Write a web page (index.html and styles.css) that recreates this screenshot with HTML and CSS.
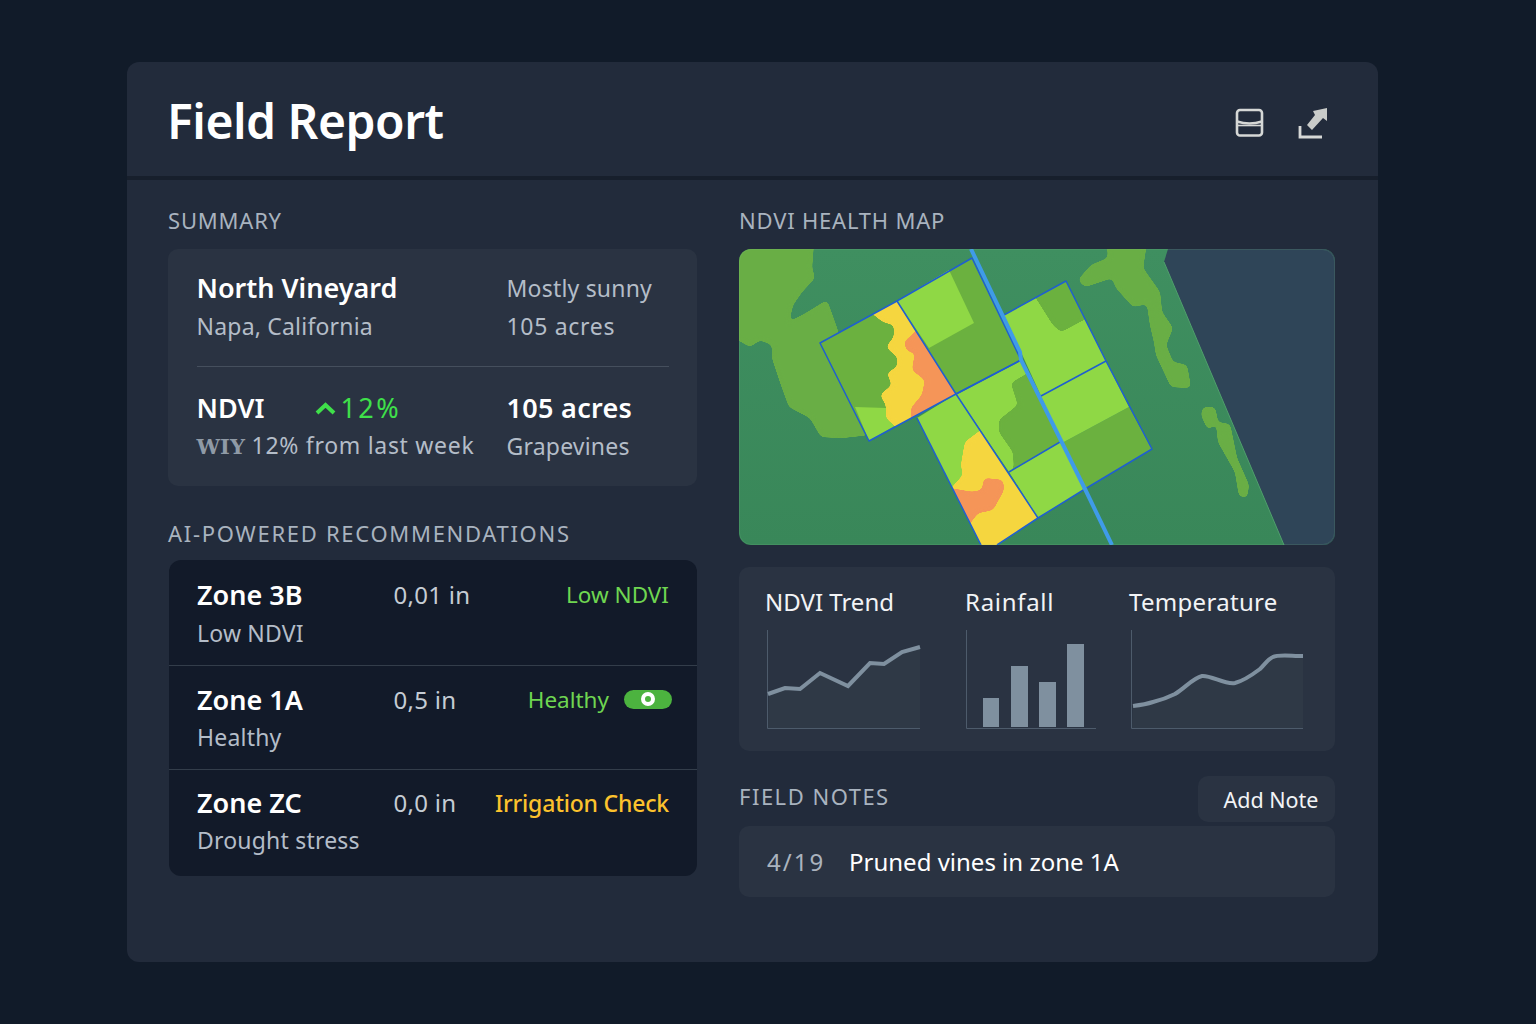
FILE: index.html
```html
<!DOCTYPE html>
<html lang="en">
<head>
  <meta charset="utf-8">
  <title>Field Report</title>
  <link rel="stylesheet" href="styles.css">
</head>
<body>
<main class="panel">
  <header class="top">
    <h1>Field Report</h1>
    <div class="top-icons">
      <svg class="icon" width="30" height="32" viewBox="0 0 30 32" fill="none" stroke="#d6d8d6" stroke-width="2.6">
        <rect x="2" y="3" width="25" height="25.5" rx="3"/>
        <path d="M2 14.5 Q14.5 18.5 27 14.5"/>
        <path d="M3 18.5 H26" stroke-width="1.6"/>
      </svg>
      <svg class="icon" width="32" height="34" viewBox="0 0 32 34">
        <path d="M3 20 V31 H25" fill="none" stroke="#d6d8d6" stroke-width="2.8"/>
        <polygon points="10,19 18,9 16,5 30,2 30,15 26,12 15,24" fill="#c9cbc9"/>
      </svg>
    </div>
  </header>

  <div class="cols">
    <div class="col-left">
      <h2 class="label">SUMMARY</h2>
      <section class="card summary">
        <div class="sum-row">
          <div>
            <div class="big">North Vineyard</div>
            <div class="sub">Napa, California</div>
          </div>
          <div>
            <div class="sub sub-top">Mostly sunny</div>
            <div class="sub sub-wide">105 acres</div>
          </div>
        </div>
        <div class="sum-row sum-lower">
          <div>
            <div class="big ndvi-line">
              <span class="ndvi-name">NDVI</span>
              <svg class="chevron" width="21" height="14" viewBox="0 0 21 14" fill="none" stroke="#3fe04a" stroke-width="4"><path d="M2 12 L10.5 4 L19 12"/></svg>
              <span class="delta">12%</span>
            </div>
            <div class="sub sub-wide"><b class="wiy">WIY</b> 12% from last week</div>
          </div>
          <div>
            <div class="big big-wide">105 acres</div>
            <div class="sub">Grapevines</div>
          </div>
        </div>
      </section>

      <h2 class="label label-rec">AI-POWERED RECOMMENDATIONS</h2>
      <section class="zones">
        <div class="zone">
          <div>
            <div class="big">Zone 3B</div>
            <div class="sub">Low NDVI</div>
          </div>
          <div class="amount">0,01 in</div>
          <div class="status green">Low NDVI</div>
        </div>
        <div class="zone">
          <div>
            <div class="big">Zone 1A</div>
            <div class="sub">Healthy</div>
          </div>
          <div class="amount">0,5 in</div>
          <div class="status green">Healthy <span class="toggle"><span class="toggle-dot"></span></span></div>
        </div>
        <div class="zone zone-last">
          <div>
            <div class="big">Zone ZC</div>
            <div class="sub">Drought stress</div>
          </div>
          <div class="amount">0,0 in</div>
          <div class="status amber">Irrigation Check</div>
        </div>
      </section>
    </div>

    <div class="col-right">
      <h2 class="label">NDVI HEALTH MAP</h2>
      <svg class="map" width="596" height="296" viewBox="0 0 596 296">
        <defs>
          <linearGradient id="ground" x1="0" y1="0" x2="0" y2="1">
            <stop offset="0" stop-color="#3f8f60"/>
            <stop offset="1" stop-color="#398759"/>
          </linearGradient>
          <filter id="goo" filterUnits="userSpaceOnUse" x="-30" y="-30" width="660" height="360" color-interpolation-filters="sRGB">
            <feGaussianBlur stdDeviation="2.4"/>
            <feColorMatrix values="1 0 0 0 0  0 1 0 0 0  0 0 1 0 0  0 0 0 18 -8"/>
          </filter>
          <clipPath id="clip-a"><polygon points="81,94 158,52 217,145 130,192"/></clipPath>
          <clipPath id="clip-c"><polygon points="178,169 217,145 299,269 258,296 242,296"/></clipPath>
          <clipPath id="clip-d"><polygon points="217,145 282,111 321,193 270,223"/></clipPath>
          <clipPath id="clip-f"><polygon points="265,66 327,32 367,112 302,147"/></clipPath>
        </defs>
        <rect width="596" height="296" fill="url(#ground)"/>
        <polygon points="429,0 425,13 545,296 596,296 596,0" fill="#2f4558"/>
        <path d="M425 13 L545 296" stroke="#4f9f6c" stroke-width="1"/>
        <g fill="#69ae45" filter="url(#goo)">
          <polygon points="-20,-20 76,-20 73,19 76,29 63,43 54,56 50,73 67,64 88,51 98,79 130,186 103,189 82,188 71,169 50,158 42,136 33,109 33,96 21,91 11,98 -20,80"/>
          <polygon points="367,-20 369,9 352,16 339,31 346,38 373,29 377,39 394,58 408,55 411,76 415,93 417,106 432,138 452,139 448,116 434,113 427,96 434,79 423,63 421,43 404,19 410,-20"/>
          <polygon points="464,158 476,158 479,173 469,181 462,166"/>
          <polygon points="477,173 491,175 498,209 510,236 508,249 500,247 496,223 479,193"/>
        </g>
        <g fill="#6bb13f">
          <polygon points="81,94 158,52 217,145 130,192"/>
          <polygon points="158,52 233,9 282,111 217,145"/>
          <polygon points="323,194 390,158 413,200 346,240"/>
        </g>
        <g fill="#8fd845">
          <polygon points="158,52 210,21 235,74 190,99"/>
          <polygon points="178,169 217,145 299,269 258,296 242,296"/>
          <polygon points="217,145 282,111 321,193 270,223"/>
          <polygon points="270,223 321,193 346,240 299,269"/>
          <polygon points="265,66 327,32 367,112 302,147"/>
          <polygon points="302,147 367,112 390,158 323,194"/>
          <polygon points="116,158 147,159 157,176 130,192"/>
        </g>
        <g clip-path="url(#clip-d)">
          <polygon filter="url(#goo)" fill="#6bb13f" points="296,120 272,134 279,156 260,171 260,183 274,203 275,219 262,232 335,198"/>
        </g>
        <g clip-path="url(#clip-f)">
          <polygon filter="url(#goo)" fill="#6bb13f" points="290,38 340,20 350,68 322,83 314,76"/>
        </g>
        <g clip-path="url(#clip-a)">
          <polygon filter="url(#goo)" fill="#f5d63f" points="130,62 144,73 155,76 155,88 147,98 159,109 158,118 148,124 153,136 141,146 147,156 147,169 157,178 165,190 235,150 165,40"/>
          <polygon filter="url(#goo)" fill="#f59558" points="176,83 165,93 168,102 176,104 173,121 186,131 183,146 172,159 172,175 235,150 190,70"/>
        </g>
        <g clip-path="url(#clip-c)">
          <polygon filter="url(#goo)" fill="#f5d63f" points="250,175 226,193 222,216 224,226 208,244 230,310 265,310 312,268"/>
          <polygon filter="url(#goo)" fill="#f59558" points="205,238 233,243 243,241 245,229 264,231 265,241 254,261 239,264 232,273 225,285"/>
        </g>
        <g fill="none" stroke="#1f5fd0" stroke-width="1.5" stroke-linejoin="round">
          <polygon points="81,94 158,52 233,9 282,111 217,145 130,192"/>
          <path d="M158 52 L217 145 L299 269"/>
          <path d="M178 169 L242 296"/>
          <path d="M258 296 L299 269 L346 240 L413 200 L367 112 L327 32 L265 66"/>
          <path d="M270 223 L321 193"/>
          <path d="M302 147 L367 112"/>
          <path d="M217 145 L282 111"/>
        </g>
        <path d="M232 0 L281 103 L282 111 L346 240 L373 296" fill="none" stroke="#3f9be8" stroke-width="4"/>
        <rect x="0.5" y="0.5" width="595" height="295" rx="12" fill="none" stroke="#7fc98a" stroke-opacity="0.15"/>
      </svg>

      <section class="card charts">
        <div class="chart">
          <h3>NDVI Trend</h3>
          <svg width="155" height="99" viewBox="0 0 155 99">
            <polygon points="2,64 18,58 33,59 53,43 81,56 103,33 117,34 135,22 153,17 153,98 1,98" fill="#2f3946"/>
            <path d="M0.5 0 V98.5 H153" fill="none" stroke="#4d5b6b"/>
            <polyline points="1,64 18,58 33,59 53,43 81,56 103,33 117,34 135,22 153,17" fill="none" stroke="#7f909f" stroke-width="4"/>
          </svg>
        </div>
        <div class="chart">
          <h3 class="title-rain">Rainfall</h3>
          <svg class="rain-plot" width="130" height="99" viewBox="0 0 130 99">
            <path d="M0.5 0 V98.5 H130" fill="none" stroke="#4d5b6b"/>
            <rect x="17" y="68" width="16" height="29" fill="#7f909f"/>
            <rect x="45" y="36" width="17" height="61" fill="#7f909f"/>
            <rect x="73" y="52" width="17" height="45" fill="#7f909f"/>
            <rect x="101" y="14" width="17" height="83" fill="#7f909f"/>
          </svg>
        </div>
        <div class="chart">
          <h3 class="title-temp">Temperature</h3>
          <svg width="173" height="99" viewBox="0 0 173 99">
            <path d="M2 76 C10 75 16 74 22 72 C30 70 38 67 44 64 C54 58 62 48 71 46 C80 45 94 55 104 53 C112 51 121 45 129 39 C134 34 137 29 142 27 C147 24 160 26 172 26 V98 H1 Z" fill="#2f3946"/>
            <path d="M0.5 0 V98.5 H172" fill="none" stroke="#4d5b6b"/>
            <path d="M2 76 C10 75 16 74 22 72 C30 70 38 67 44 64 C54 58 62 48 71 46 C80 45 94 55 104 53 C112 51 121 45 129 39 C134 34 137 29 142 27 C147 24 160 26 172 26" fill="none" stroke="#7f909f" stroke-width="4"/>
          </svg>
        </div>
      </section>

      <div class="notes-head">
        <h2 class="label label-flat">FIELD NOTES</h2>
        <button class="add-note">Add Note</button>
      </div>
      <section class="card note">
        <span class="note-date">4/19</span>
        <span class="note-text">Pruned vines in zone 1A</span>
      </section>
    </div>
  </div>
</main>
</body>
</html>
```

FILE: styles.css
```css
html, body {
    margin: 0;
    background: #111b29;
}

body {
    width: 1536px;
    height: 1024px;
    box-sizing: border-box;
    padding: 62px 158px 62px 127px;
    color: #fff;
    font-family: "Noto Sans", "Open Sans", sans-serif;
    overflow: hidden;
}

.panel {
    height: 900px;
    background: #222b3b;
    border-radius: 12px;
}

.top {
    height: 114px;
    display: flex;
    align-items: center;
    justify-content: space-between;
    padding: 0 49px 0 40px;
    border-bottom: 4px solid #171f2c;
}

h1 {
    margin: 3px 0 0;
    font-size: 48px;
    font-weight: 600;
    letter-spacing: -0.5px;
}

.top-icons {
    display: flex;
    gap: 32px;
    align-items: center;
    margin-top: 8px;
}

.icon {
    display: block;
}

.cols {
    display: grid;
    grid-template-columns: 529px 596px;
    column-gap: 42px;
    padding: 0 0 0 41px;
}

.label {
    margin: 0;
    height: 69px;
    line-height: 80px;
    font-size: 22px;
    font-weight: 400;
    letter-spacing: 0.8px;
    color: #a9b3bf;
}

.label-rec {
    height: 74px;
    line-height: 94px;
    letter-spacing: 1.7px;
}

.label-flat {
    height: auto;
    line-height: normal;
    letter-spacing: 1.5px;
    margin-top: -6px;
}

.card {
    background: #2a3342;
    border-radius: 10px;
}

.summary {
    height: 237px;
    box-sizing: border-box;
    padding: 20px 28px 0 28.5px;
}

.sum-row {
    display: grid;
    grid-template-columns: 310px auto;
    padding-bottom: 21px;
    border-bottom: 1px solid #454f5d;
}

.sum-lower {
    border-bottom: 0;
    padding-top: 22px;
}

.big {
    font-size: 27px;
    font-weight: 600;
    line-height: 38px;
}

.big-wide {
    letter-spacing: 0.3px;
}

.sub {
    font-size: 23px;
    line-height: 38px;
    letter-spacing: 0.2px;
    color: #b4bdc8;
}

.sub-top {
    line-height: 37px;
    padding-top: 1px;
}

.sub-wide {
    letter-spacing: 0.7px;
}

.ndvi-line {
    display: flex;
    align-items: center;
    margin-bottom: -1px;
}

.ndvi-name {
    width: 118px;
}

.chevron {
    margin-right: 5px;
}

.delta {
    color: #3fe04a;
    font-weight: 400;
    letter-spacing: 2.4px;
}

.wiy {
    font-family: "DejaVu Serif", serif;
    font-size: 21px;
    letter-spacing: 0;
    color: #8f9aa6;
}

.zones {
    background: #121a29;
    border-radius: 12px;
    height: 316px;
    margin-left: 1px;
    display: grid;
    grid-template-rows: 106px 104px 106px;
}

.zone {
    display: grid;
    grid-template-columns: 196.5px 1fr auto;
    align-items: start;
    padding: 15px 28px 0;
    border-bottom: 1px solid #333d4a;
}

.zone:first-child {
    padding-top: 16px;
}

.zone-last {
    border-bottom: 0;
    padding-top: 14px;
}

.zone .sub {
    line-height: 37px;
}

.zone:first-child .sub {
    line-height: 39px;
}

.amount {
    font-size: 24px;
    line-height: 38px;
    letter-spacing: 0.3px;
    color: #c5ccd4;
}

.status {
    font-size: 22.5px;
    line-height: 38px;
    display: flex;
    align-items: center;
    gap: 15px;
}

.green {
    color: #6fd651;
}

.amber {
    color: #fcc22d;
    font-size: 23px;
    font-weight: 500;
    letter-spacing: -0.2px;
}

.toggle {
    width: 48px;
    height: 19px;
    margin: -2px -3px 0 0;
    border-radius: 10px;
    background: #4cb33f;
    display: flex;
    align-items: center;
    justify-content: center;
}

.toggle-dot {
    width: 6px;
    height: 6px;
    border: 4px solid #fff;
    border-radius: 50%;
}

.map {
    display: block;
    border-radius: 12px;
}

.charts {
    margin-top: 22px;
    height: 184px;
    box-sizing: border-box;
    padding: 16px 0 0 26px;
    display: grid;
    grid-template-columns: 200px 164px auto;
}

.chart h3 {
    margin: 0 0 9px;
    font-size: 24px;
    font-weight: 400;
    line-height: 38px;
    color: #f2f4f6;
}

.chart .title-rain {
    letter-spacing: 0.7px;
}

.chart .title-temp {
    letter-spacing: 0.3px;
}

.chart svg {
    display: block;
    margin-left: 2px;
}

.chart .rain-plot {
    margin-left: 1px;
}

.notes-head {
    margin-top: 25px;
    display: flex;
    align-items: center;
    justify-content: space-between;
}

.add-note {
    width: 137px;
    height: 46px;
    border: 0;
    border-radius: 10px;
    padding: 0 0 0 9px;
    background: #2a3342;
    color: #f2f4f6;
    font-family: inherit;
    font-size: 21.5px;
}

.note {
    margin-top: 4px;
    height: 71px;
    display: flex;
    align-items: center;
    padding-left: 27px;
    font-size: 24px;
}

.note-date {
    width: 82px;
    margin-left: 1px;
    letter-spacing: 2px;
    color: #aab3be;
}
```
